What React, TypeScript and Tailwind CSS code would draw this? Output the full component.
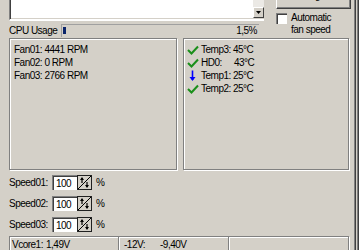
import React from 'react';

const etched = 'border border-[#808080] shadow-[inset_1px_1px_0_#fff,1px_1px_0_#fff]';

const Check = () => (
  <svg width="12" height="10" viewBox="0 0 12 10" className="shrink-0">
    <path d="M1 5 L4.5 8.5 L11 1.5" stroke="#1a8f1a" strokeWidth="2" fill="none" />
  </svg>
);

const DownArrow = () => (
  <svg width="12" height="12" viewBox="0 0 12 12" className="shrink-0">
    <path d="M5.5 0.5 V10" stroke="#0000ff" strokeWidth="1.6" />
    <path d="M2.5 7 L5.5 11 L8.5 7 Z" fill="#0000ff" />
  </svg>
);

const SpinIcon = () => (
  <svg width="15" height="15" viewBox="0 0 15 15" className="shrink-0">
    <rect x="0.5" y="0.5" width="14" height="14" fill="#d4d0c8" stroke="#202020" />
    <path d="M1 14 L14 1" stroke="#000" strokeWidth="1" />
    <path d="M5 3 V8" stroke="#000" strokeWidth="1.2" />
    <path d="M3 5 L5 2 L7 5 Z" fill="#000" />
    <path d="M10 7 V12" stroke="#000" strokeWidth="1.2" />
    <path d="M8 10 L10 13 L12 10 Z" fill="#000" />
  </svg>
);

const fans = ['Fan01: 4441 RPM', 'Fan02: 0 RPM', 'Fan03: 2766 RPM'];

const temps = [
  { icon: 'ok', label: 'Temp3:', value: '45°C', pad: false },
  { icon: 'ok', label: 'HD0:', value: '43°C', pad: true },
  { icon: 'down', label: 'Temp1:', value: '25°C', pad: false },
  { icon: 'ok', label: 'Temp2:', value: '25°C', pad: false },
];

const SpeedRow: React.FC<{ name: string }> = ({ name }) => (
  <div className="flex items-center h-[15px] shrink-0">
    <span className="w-[43px]">{name}</span>
    <div className="w-[25px] h-[15px] bg-white border-t border-l border-[#808080] border-b-white border-r-white shadow-[inset_1px_1px_0_#404040] pl-[3px] flex items-center">
      100
    </div>
    <SpinIcon />
    <span className="ml-[4px]">%</span>
  </div>
);

export default function App() {
  return (
    <div className="w-[359px] h-[250px] overflow-hidden bg-[#d4d0c8] flex font-['Liberation_Sans',Arial,sans-serif] text-[10px] tracking-[-0.5px] leading-[13px] text-black">
      <div className="w-[354px] pl-[9px] flex flex-col shrink-0">
        {/* top area */}
        <div className="flex h-[38px] shrink-0">
          <div className="w-[255px] flex flex-col">
            <div className="flex h-[21px] shrink-0 border-l border-[#808080] border-b-2 border-b-white shadow-[inset_1px_0_0_#404040,inset_0_-1px_0_#d4d0c8]">
              <div className="flex-1 bg-white ml-[1px] mb-[1px]" />
              <div className="w-[11px] flex flex-col mb-[1px]">
                <div className="h-[7px] bg-[#ebe9e5]" />
                <div className="h-[11px] bg-[#d4d0c8] border border-t-white border-l-white border-b-[#404040] border-r-[#404040] flex items-center justify-center">
                  <svg width="5" height="3" viewBox="0 0 5 3">
                    <path d="M0 0 H5 L2.5 3 Z" fill="#000" />
                  </svg>
                </div>
              </div>
            </div>
            <div className="flex items-center mt-[3px] h-[13px] shrink-0">
              <span className="w-[52px]">CPU Usage</span>
              <div className="relative w-[198px] h-[13px] border-t border-l border-[#a0a0a0] border-b-white border-r-white">
                <div className="absolute left-[1px] top-[2px] w-[3px] h-[7px] bg-[#0a246a]" />
                <span className="absolute right-[2px] top-0 leading-[12px]">1,5%</span>
              </div>
            </div>
          </div>
          <div className="ml-[12px] w-[75px] flex flex-col">
            <div className="-mt-[14px] h-[23px] shrink-0 border border-t-white border-l-white border-b-[#404040] border-r-[#404040] shadow-[inset_-1px_-1px_0_#808080] flex items-end justify-center pb-[6px]">
              Configure
            </div>
            <div className="flex items-start mt-[3px]">
              <div className="w-[11px] h-[11px] bg-white border-t border-l border-[#808080] border-b-white border-r-white shadow-[inset_1px_1px_0_#404040] mt-[1px]" />
              <div className="ml-[4px] leading-[12px]">
                Automatic
                <br />
                fan speed
              </div>
            </div>
          </div>
        </div>

        {/* panels */}
        <div className="flex h-[132px] shrink-0">
          <div className={`w-[168px] h-full ${etched} pl-[4px] pt-[4px]`}>
            {fans.map((f) => (
              <div key={f}>{f}</div>
            ))}
          </div>
          <div className={`ml-[6px] w-[166px] h-full ${etched} pl-[3px] pt-[4px]`}>
            {temps.map((t, i) => (
              <div key={i} className="flex items-center h-[13px]">
                <div className="w-[14px] flex items-center">
                  {t.icon === 'ok' ? <Check /> : <DownArrow />}
                </div>
                <span className={t.pad ? 'w-[33px]' : 'w-[32px]'}>{t.label}</span>
                <span>{t.value}</span>
              </div>
            ))}
          </div>
        </div>

        {/* speeds */}
        <div className="flex flex-col gap-[6px] mt-[5px] shrink-0">
          <SpeedRow name="Speed01:" />
          <SpeedRow name="Speed02:" />
          <SpeedRow name="Speed03:" />
        </div>

        {/* voltages */}
        <div className={`mt-[4px] w-[340px] h-[30px] shrink-0 ${etched} flex`}>
          <div className="w-[109px] flex pl-[2px] pt-[1px] border-r border-[#808080] shadow-[1px_0_0_#fff]">
            <span className="w-[34px]">Vcore1:</span>
            <span>1,49V</span>
          </div>
          <div className="w-[110px] flex pl-[5px] pt-[1px] border-r border-[#808080] shadow-[1px_0_0_#fff]">
            <span className="w-[36px]">-12V:</span>
            <span>-9,40V</span>
          </div>
          <div className="flex-1" />
        </div>
      </div>
      {/* window edge */}
      <div className="flex h-full shrink-0">
        <div className="w-[1px] bg-[#808080]" />
        <div className="w-[1px] bg-[#404040]" />
        <div className="w-[1px] bg-[#d4d0c8]" />
        <div className="w-[1px] bg-[#808080]" />
        <div className="w-[1px] bg-[#404040]" />
      </div>
    </div>
  );
}
